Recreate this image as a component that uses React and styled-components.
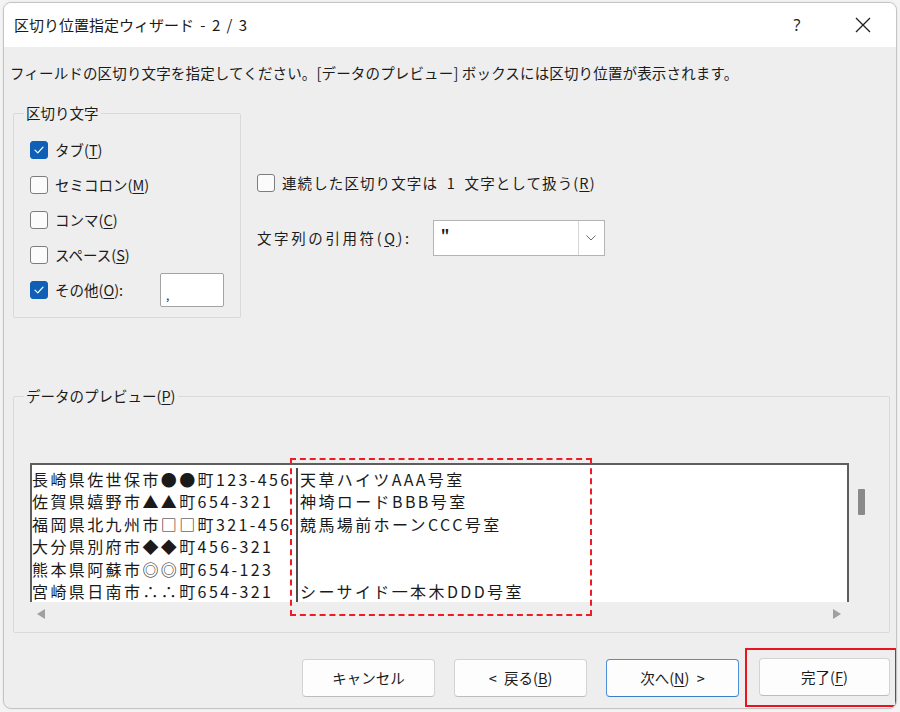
import React from 'react'
import styled, { createGlobalStyle } from 'styled-components'

const GlobalStyle = createGlobalStyle`
  html, body {
    margin: 0;
    padding: 0;
    background: #f4f4f4;
  }
  body {
    font-family: "Noto Sans CJK JP", "Noto Sans", sans-serif;
    color: #1b1b1b;
  }
  #root {
    width: 900px;
    height: 712px;
    padding: 2px 3px 3px 3px;
    box-sizing: border-box;
  }
`

const delimiters = [
  { label: 'タブ', key: 'T', checked: true },
  { label: 'セミコロン', key: 'M', checked: false },
  { label: 'コンマ', key: 'C', checked: false },
  { label: 'スペース', key: 'S', checked: false },
]

const addresses = [
  '長崎県佐世保市●●町123-456',
  '佐賀県嬉野市▲▲町654-321',
  '福岡県北九州市□□町321-456',
  '大分県別府市◆◆町456-321',
  '熊本県阿蘇市◎◎町654-123',
  '宮崎県日南市∴∴町654-321',
]

const buildings = [
  '天草ハイツAAA号室',
  '神埼ロードBBB号室',
  '競馬場前ホーンCCC号室',
  '',
  '',
  'シーサイド一本木DDD号室',
]

function CheckBox({ checked }) {
  return (
    <Box $checked={checked}>
      {checked && (
        <svg width="18" height="18" viewBox="0 0 18 18">
          <polyline points="4.5,9.2 7.6,12.2 13.5,5.8" fill="none" stroke="#fff" strokeWidth="1.4" strokeLinecap="round" strokeLinejoin="round" />
        </svg>
      )}
    </Box>
  )
}

export default function App() {
  return (
    <>
      <GlobalStyle />
      <Window>
        <TitleBar>
          <Title>区切り位置指定ウィザード - 2 / 3</Title>
          <Caption>
            <CaptionButton>?</CaptionButton>
            <CaptionButton>
              <svg width="16" height="16" viewBox="0 0 16 16">
                <path d="M1 1 L15 15 M15 1 L1 15" stroke="#1f1f1f" strokeWidth="1.3" />
              </svg>
            </CaptionButton>
          </Caption>
        </TitleBar>

        <Body>
          <Description>
            フィールドの区切り文字を指定してください。[データのプレビュー] ボックスには区切り位置が表示されます。
          </Description>

          <Options>
            <Group $width="228px">
              <Legend>区切り文字</Legend>
              <CheckList>
                {delimiters.map((d) => (
                  <CheckRow key={d.key}>
                    <CheckBox checked={d.checked} />
                    <span>{d.label}(<Key>{d.key}</Key>)</span>
                  </CheckRow>
                ))}
                <CheckRow>
                  <CheckBox checked />
                  <span>その他(<Key>O</Key>):</span>
                  <OtherInput>,</OtherInput>
                </CheckRow>
              </CheckList>
            </Group>

            <RightColumn>
              <CheckRow>
                <CheckBox checked={false} />
                <WideLabel $spacing="1.1px">連続した区切り文字は&nbsp;&nbsp;1&nbsp;&nbsp;文字として扱う(<Key>R</Key>)</WideLabel>
              </CheckRow>
              <QuoteRow>
                <WideLabel $spacing="2.6px">文字列の引用符(<Key>Q</Key>):</WideLabel>
                <Select>
                  <SelectValue>"</SelectValue>
                  <SelectArrow>
                    <svg width="10" height="6" viewBox="0 0 10 6">
                      <polyline points="0.5,0.5 5,5 9.5,0.5" fill="none" stroke="#6b6b6b" strokeWidth="1" />
                    </svg>
                  </SelectArrow>
                </Select>
              </QuoteRow>
            </RightColumn>
          </Options>

          <PreviewGroup>
            <Legend>データのプレビュー(<Key>P</Key>)</Legend>
            <PreviewInner>
              <PreviewArea>
                <PreviewBox>
                  <Column $width="264px" $divider>
                    {addresses.map((t, i) => <Line key={i}>{t}</Line>)}
                  </Column>
                  <Column>
                    {buildings.map((t, i) => <Line key={i}>{t || '\u00a0'}</Line>)}
                  </Column>
                </PreviewBox>
                <HScroll>
                  <Arrow $dir="left" />
                  <Arrow $dir="right" />
                </HScroll>
                <DashedMark />
              </PreviewArea>
              <VScroll>
                <Thumb />
              </VScroll>
            </PreviewInner>
          </PreviewGroup>

          <ButtonRow>
            <Button>キャンセル</Button>
            <Button>&lt; 戻る(<Key>B</Key>)</Button>
            <Button $primary>次へ(<Key>N</Key>) &gt;</Button>
            <Highlight>
              <Button $width="131px">完了(<Key>F</Key>)</Button>
            </Highlight>
          </ButtonRow>
        </Body>
      </Window>
    </>
  )
}

const Window = styled.div`
  width: 894px;
  height: 707px;
  box-sizing: border-box;
  border: 1px solid #c4c4c4;
  border-radius: 8px;
  overflow: hidden;
  background: #eeeeee;
  display: flex;
  flex-direction: column;
  box-shadow: 0 0 3px rgba(0, 0, 0, 0.08);
`

const TitleBar = styled.div`
  height: 44px;
  flex-shrink: 0;
  background: #ffffff;
  display: flex;
  align-items: center;
  justify-content: space-between;
  padding-left: 10px;
`

const Title = styled.div`
  font-size: 15px;
  color: #1a1a1a;
  line-height: 20px;
  word-spacing: 3px;
`

const Caption = styled.div`
  display: flex;
  height: 100%;
`

const CaptionButton = styled.div`
  width: 66px;
  height: 100%;
  display: flex;
  align-items: center;
  justify-content: center;
  font-size: 16px;
  font-family: "Noto Sans", sans-serif;
  color: #1f1f1f;
`

const Body = styled.div`
  flex: 1;
  display: flex;
  flex-direction: column;
  padding: 0 6px 0 6px;
  font-size: 14.5px;
  line-height: 20px;
`

const Description = styled.div`
  margin-top: 16px;
  white-space: nowrap;
  letter-spacing: 0.15px;
`

const Options = styled.div`
  display: flex;
  gap: 16px;
  margin-top: 20px;
  margin-left: 3px;
`

const Group = styled.fieldset`
  margin: 0;
  min-width: 0;
  width: ${(p) => p.$width || 'auto'};
  box-sizing: border-box;
  border: 1px solid #d9d9d9;
  border-radius: 2px;
  padding: 10px 10px 10px 16px;
`

const Legend = styled.legend`
  padding: 0 2px;
  margin-left: -6px;
  font-size: 14.5px;
  line-height: 20px;
  color: #1b1b1b;
`

const CheckList = styled.div`
  display: flex;
  flex-direction: column;
  gap: 1px;
`

const CheckRow = styled.div`
  display: flex;
  align-items: center;
  min-height: 34px;
  gap: 7px;
  white-space: nowrap;
`

const WideLabel = styled.span`
  letter-spacing: ${(p) => p.$spacing};
`

const Box = styled.div`
  width: 18px;
  height: 18px;
  flex-shrink: 0;
  box-sizing: border-box;
  border-radius: 3px;
  border: 1px solid ${(p) => (p.$checked ? '#0f5fb6' : '#7d7d7d')};
  background: ${(p) => (p.$checked ? '#0f5fb6' : '#fbfbfb')};
  display: flex;
  align-items: center;
  justify-content: center;

  svg {
    display: block;
  }
`

const Key = styled.span`
  text-decoration: underline;
  text-underline-offset: 2px;
`

const OtherInput = styled.div`
  margin-left: 30px;
  width: 64px;
  height: 34px;
  box-sizing: border-box;
  border: 1px solid #a3a3a3;
  border-radius: 2px;
  background: #ffffff;
  padding: 11px 0 0 5px;
  font-size: 12px;
  line-height: 20px;
`

const RightColumn = styled.div`
  display: flex;
  flex-direction: column;
  padding-top: 63px;
  gap: 20px;
`

const QuoteRow = styled.div`
  display: flex;
  align-items: center;
  gap: 21px;
  white-space: nowrap;
`

const Select = styled.div`
  width: 172px;
  height: 36px;
  box-sizing: border-box;
  border: 1px solid #b4b4b4;
  background: #ffffff;
  display: flex;
`

const SelectValue = styled.div`
  flex: 1;
  padding: 4px 0 0 7px;
  font-size: 15px;
  font-weight: 700;
`

const SelectArrow = styled.div`
  width: 25px;
  border-left: 1px solid #d4d4d4;
  display: flex;
  align-items: center;
  justify-content: center;
`

const PreviewGroup = styled(Group)`
  margin: 68px 0 0 3px;
  padding: 57px 0 7px 16px;
`

const PreviewInner = styled.div`
  display: flex;
`

const PreviewArea = styled.div`
  position: relative;
  width: 819px;
  display: flex;
  flex-direction: column;
`

const PreviewBox = styled.div`
  height: 139px;
  overflow: hidden;
  box-sizing: border-box;
  background: #ffffff;
  border: 2px solid #5e5e5e;
  border-bottom: none;
  display: flex;
  padding-top: 3px;
  font-family: "Noto Sans CJK JP", sans-serif;
  font-size: 16px;
  letter-spacing: 2.4px;
  color: #1a1a1a;
`

const Column = styled.div`
  width: ${(p) => p.$width || 'auto'};
  flex: ${(p) => (p.$width ? '0 0 auto' : '1')};
  overflow: hidden;
  padding-left: ${(p) => (p.$divider ? '0' : '2px')};
  border-right: ${(p) => (p.$divider ? '2px solid #4a4a4a' : 'none')};
`

const Line = styled.div`
  height: 22.4px;
  line-height: 22.4px;
  white-space: nowrap;
`

const HScroll = styled.div`
  height: 23px;
  display: flex;
  align-items: center;
  justify-content: space-between;
  padding: 0 8px 0 7px;
`

const Arrow = styled.div`
  width: 0;
  height: 0;
  border-top: 5px solid transparent;
  border-bottom: 5px solid transparent;
  ${(p) => (p.$dir === 'left' ? 'border-right: 8px solid #a0a0a0;' : 'border-left: 8px solid #a0a0a0;')}
`

const DashedMark = styled.div`
  position: absolute;
  left: 260px;
  top: -5px;
  width: 302px;
  height: 158px;
  box-sizing: border-box;
  border: 2px dashed #ee1c25;
  pointer-events: none;
`

const VScroll = styled.div`
  flex: 1;
  padding: 26px 0 0 9px;
`

const Thumb = styled.div`
  width: 7px;
  height: 26px;
  border-radius: 1px;
  background: #8a8a8a;
`

const ButtonRow = styled.div`
  display: flex;
  justify-content: flex-end;
  align-items: center;
  gap: 19px;
  margin: 15px -7px 0 0;
`

const Button = styled.div`
  width: ${(p) => p.$width || '133px'};
  height: 38px;
  box-sizing: border-box;
  border-radius: 4px;
  border: 1px solid ${(p) => (p.$primary ? '#4d8fd6' : '#d3d3d3')};
  border-bottom-color: ${(p) => (p.$primary ? '#3b7fc9' : '#bdbdbd')};
  background: #fdfdfd;
  display: flex;
  align-items: center;
  justify-content: center;
  font-size: 14.5px;
  color: #1b1b1b;
  white-space: pre;
  word-spacing: 4px;
`

const Highlight = styled.div`
  margin-left: -13px;
  border: 2px solid #e8141e;
  padding: 8px 5px 9px 12px;
`
